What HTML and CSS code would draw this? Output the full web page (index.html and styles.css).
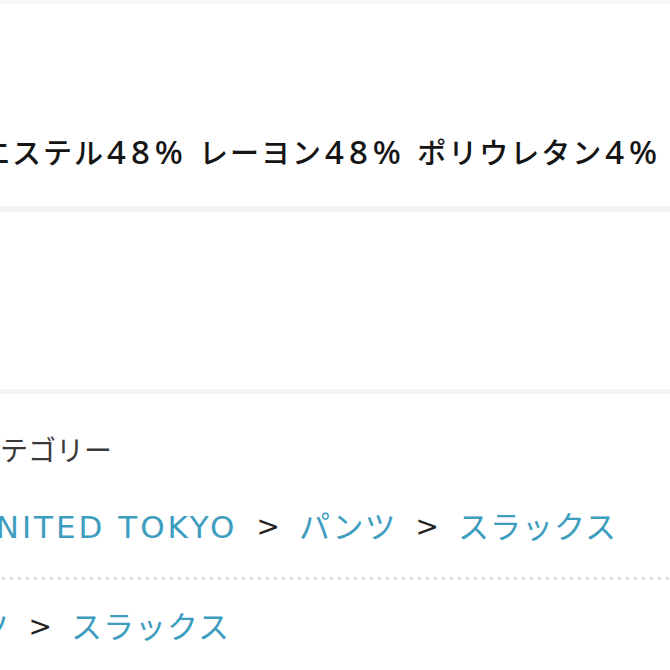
FILE: index.html
```html
<!DOCTYPE html>
<html lang="ja">
<head>
	<meta charset="UTF-8">
	<title>商品の情報</title>
	<link rel="stylesheet" href="styles.css">
</head>
<body>
<div class="page">
	<div class="band"></div>
	<section class="material">
		<p class="material-text">ポリエステル<span class="num">48%</span> レーヨン<span class="num">48%</span> ポリウレタン<span class="num">4%</span></p>
	</section>
	<div class="band band-wide"></div>
	<section class="blank"></section>
	<section class="category">
		<p class="category-label">カテゴリー</p>
		<div class="crumbs crumbs-brand">
			<a href="#" class="brand">UNITED TOKYO</a>
			<span class="sep">&gt;</span>
			<a href="#">パンツ</a>
			<span class="sep">&gt;</span>
			<a href="#">スラックス</a>
		</div>
		<div class="crumbs crumbs-item">
			<a href="#">パンツ</a>
			<span class="sep">&gt;</span>
			<a href="#">スラックス</a>
		</div>
	</section>
</div>
</body>
</html>
```

FILE: styles.css
```css
html, body{
	margin: 0;
	padding: 0;
	background: #fff;
}
body{
	width: 670px;
	height: 670px;
	overflow: hidden;
	font-family: "DejaVu Sans", "Noto Sans CJK JP", sans-serif;
}
p{
	margin: 0;
}

/* 区切りの灰色の帯 */
.band{
	height: 4px;
	background: #f6f6f6;
}
.band-wide{
	height: 6px;
	background: #f3f3f3;
}

.material{
	padding: 130px 0 32px;
}
.material-text{
	margin-left: -81px; /* 左側は画面の外 */
	height: 40px;
	white-space: nowrap;
	font-size: 29px;
	font-weight: 500;
	line-height: 40px;
	letter-spacing: 2px;
	color: #151515;
}
.material-text .num{
	font-family: "Noto Sans", sans-serif;
	font-size: 33px;
	line-height: 1;
	letter-spacing: 5px;
	margin-left: 2px;
}

.blank{
	height: 177px;
}

.category{
	border-top: 5px solid #f4f4f4;
	padding-top: 40px;
}
.category-label{
	margin-left: -28px;
	white-space: nowrap;
	font-size: 28px;
	line-height: 36px;
	color: #3a3a3a;
}

.crumbs{
	display: flex;
	align-items: center;
	gap: 19px;
	white-space: nowrap;
	font-size: 31px;
	line-height: 44px;
}
.crumbs a{
	color: #3d9dbe;
	text-decoration: none;
	letter-spacing: 1px;
}
.crumbs a.brand{
	letter-spacing: 3px;
}
.crumbs .sep{
	color: #222;
	font-size: 28px;
}
.crumbs-brand{
	margin-top: 35px;
	margin-left: -30px;
	padding-bottom: 31px;
	/* 点線 */
	background-image: repeating-linear-gradient(to right, #dcdcdc 0 3px, transparent 3px 8px);
	background-size: 100% 3px;
	background-position: left bottom;
	background-repeat: no-repeat;
	width: 720px;
}
.crumbs-item{
	margin-top: 25px;
	margin-left: -88px;
}
```
